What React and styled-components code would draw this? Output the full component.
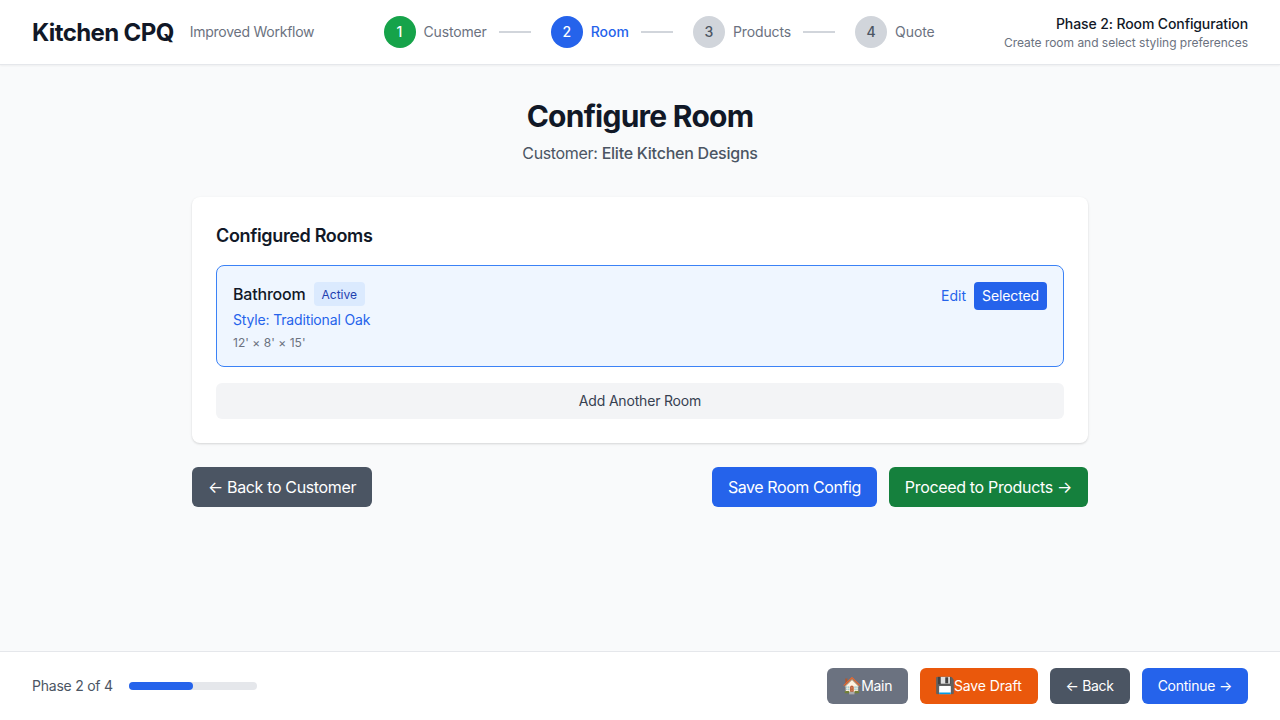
import React from "react";
import styled, { createGlobalStyle } from "styled-components";

const Global = createGlobalStyle`
  *, *::before, *::after { box-sizing: border-box; }
  body {
    margin: 0;
    background: #f9fafb;
    font-family: Inter, "Liberation Sans", sans-serif;
    font-size: 16px;
    line-height: 24px;
    color: #111827;
    -webkit-font-smoothing: antialiased;
  }
  h1, h2, h3, p { margin: 0; }
  button { font-family: inherit; border: 0; margin: 0; cursor: pointer; }
`;

const Page = styled.div`
  height: 100vh;
  display: flex;
  flex-direction: column;
`;

const Header = styled.header`
  flex: none;
  height: 65px;
  padding: 0 32px;
  display: flex;
  align-items: center;
  justify-content: space-between;
  background: #fff;
  border-bottom: 1px solid #e5e7eb;
  box-shadow: 0 1px 2px rgba(0, 0, 0, 0.05);
`;

const Brand = styled.div`
  display: flex;
  align-items: center;
  gap: 16px;
  white-space: nowrap;
`;

const BrandName = styled.h1`
  padding-top: 2px;
  font-size: 24px;
  line-height: 32px;
  font-weight: 700;
  letter-spacing: -0.61px;
`;

const Tagline = styled.span`
  font-size: 14px;
  line-height: 20px;
  color: #6b7280;
  letter-spacing: -0.25px;
`;

const Steps = styled.nav`
  display: flex;
  align-items: center;
  gap: 20px;
`;

const Step = styled.div`
  display: flex;
  align-items: center;
`;

const circleColors = {
  done: ["#16a34a", "#fff"],
  current: ["#2563eb", "#fff"],
  todo: ["#d1d5db", "#4b5563"],
};

const StepCircle = styled.span`
  width: 32px;
  height: 32px;
  border-radius: 50%;
  display: flex;
  align-items: center;
  justify-content: center;
  font-size: 14px;
  font-weight: 500;
  background: ${(p) => circleColors[p.$state][0]};
  color: ${(p) => circleColors[p.$state][1]};
`;

const StepLabel = styled.span`
  margin-left: 8px;
  font-size: 14px;
  line-height: 20px;
  letter-spacing: ${(p) => p.$tracking}px;
  font-weight: ${(p) => (p.$current ? 500 : 400)};
  color: ${(p) => (p.$current ? "#2563eb" : "#6b7280")};
`;

const StepLine = styled.span`
  width: 32px;
  height: 2px;
  margin-left: 12px;
  background: #d1d5db;
`;

const PhaseInfo = styled.div`
  text-align: right;
  white-space: nowrap;
`;

const PhaseTitle = styled.p`
  font-size: 14px;
  line-height: 20px;
  font-weight: 500;
  letter-spacing: -0.11px;
`;

const PhaseHint = styled.p`
  padding-top: 1px;
  margin-bottom: -1px;
  font-size: 12px;
  line-height: 16px;
  color: #6b7280;
  letter-spacing: -0.02px;
`;

const Main = styled.main`
  flex: 1;
  width: 896px;
  margin: 0 auto;
  padding-top: 32px;
`;

const Intro = styled.div`
  text-align: center;
  margin-bottom: 32px;
`;

const Title = styled.h2`
  padding-top: 1px;
  font-size: 30px;
  line-height: 36px;
  font-weight: 700;
  letter-spacing: -0.75px;
  margin-bottom: 7px;
`;

const Subtitle = styled.p`
  color: #4b5563;
  letter-spacing: -0.34px;
  strong {
    font-weight: 500;
    letter-spacing: -0.24px;
  }
`;

const Card = styled.section`
  padding: 24px;
  background: #fff;
  border-radius: 8px;
  box-shadow: 0 1px 3px rgba(0, 0, 0, 0.1), 0 1px 2px rgba(0, 0, 0, 0.06);
`;

const CardTitle = styled.h3`
  padding-top: 1px;
  font-size: 18px;
  line-height: 28px;
  font-weight: 600;
  letter-spacing: -0.35px;
  margin-bottom: 15px;
`;

const Room = styled.div`
  display: flex;
  justify-content: space-between;
  align-items: flex-start;
  padding: 16px;
  border: 1px solid #3b82f6;
  border-radius: 8px;
  background: #eff6ff;
`;

const RoomInfo = styled.div`
  display: flex;
  flex-direction: column;
  gap: 4px;
`;

const RoomHeading = styled.div`
  display: flex;
  align-items: center;
  gap: 8px;
`;

const RoomName = styled.span`
  font-weight: 500;
  letter-spacing: -0.2px;
`;

const Badge = styled.span`
  padding: 5px 8px 3px;
  border-radius: 4px;
  background: #dbeafe;
  color: #1e40af;
  font-size: 12px;
  line-height: 16px;
`;

const RoomStyle = styled.p`
  font-size: 14px;
  line-height: 20px;
  color: #2563eb;
  letter-spacing: -0.16px;
`;

const RoomSize = styled.p`
  padding-top: 1px;
  margin-bottom: -1px;
  font-size: 12px;
  line-height: 16px;
  color: #6b7280;
  letter-spacing: 0.04px;
`;

const RoomActions = styled.div`
  display: flex;
  align-items: center;
  gap: 8px;
`;

const EditButton = styled.button`
  padding: 0;
  background: none;
  color: #2563eb;
  font-size: 14px;
  line-height: 20px;
`;

const SelectedButton = styled.button`
  padding: 4px 8px;
  border-radius: 4px;
  background: #2563eb;
  color: #fff;
  font-size: 14px;
  line-height: 20px;
  letter-spacing: -0.12px;
`;

const AddButton = styled.button`
  display: block;
  width: 100%;
  height: 36px;
  margin-top: 16px;
  border-radius: 6px;
  background: #f3f4f6;
  color: #374151;
  font-size: 14px;
  line-height: 20px;
  letter-spacing: -0.18px;
`;

const Actions = styled.div`
  display: flex;
  justify-content: space-between;
  margin-top: 24px;
`;

const ButtonGroup = styled.div`
  display: flex;
  gap: 12px;
`;

const Button = styled.button`
  display: flex;
  align-items: center;
  padding: 8px 16px;
  border-radius: 6px;
  color: #fff;
  white-space: nowrap;
  background: ${(p) => p.$bg};
  font-size: ${(p) => (p.$small ? 14 : 16)}px;
  line-height: ${(p) => (p.$small ? 20 : 24)}px;
  letter-spacing: ${(p) => p.$tracking}px;
`;

const Emoji = styled.span`
  width: 17.8px;
  padding-bottom: 1px;
  margin-top: -1px;
  display: flex;
  justify-content: center;
  font-size: 16px;
  letter-spacing: 0;
`;

const Footer = styled.footer`
  flex: none;
  height: 69px;
  padding: 0 32px;
  display: flex;
  align-items: center;
  justify-content: space-between;
  background: #fff;
  border-top: 1px solid #e5e7eb;
`;

const Progress = styled.div`
  display: flex;
  align-items: center;
  gap: 16px;
  font-size: 14px;
  line-height: 20px;
  letter-spacing: -0.23px;
  color: #4b5563;
`;

const Track = styled.div`
  width: 128px;
  height: 8px;
  border-radius: 4px;
  background: #e5e7eb;
`;

const Fill = styled.div`
  width: 50%;
  height: 8px;
  border-radius: 4px;
  background: #2563eb;
`;

const steps = [
  { label: "Customer", state: "done", tracking: -0.15 },
  { label: "Room", state: "current", tracking: 0 },
  { label: "Products", state: "todo", tracking: -0.13 },
  { label: "Quote", state: "todo", tracking: -0.05 },
];

export default function App() {
  return (
    <Page>
      <Global />
      <Header>
        <Brand>
          <BrandName>Kitchen CPQ</BrandName>
          <Tagline>Improved Workflow</Tagline>
        </Brand>
        <Steps>
          {steps.map(({ label, state, tracking }, i) => (
            <Step key={label}>
              <StepCircle $state={state}>{i + 1}</StepCircle>
              <StepLabel $current={state === "current"} $tracking={tracking}>
                {label}
              </StepLabel>
              {i < steps.length - 1 && <StepLine />}
            </Step>
          ))}
        </Steps>
        <PhaseInfo>
          <PhaseTitle>Phase 2: Room Configuration</PhaseTitle>
          <PhaseHint>Create room and select styling preferences</PhaseHint>
        </PhaseInfo>
      </Header>
      <Main>
        <Intro>
          <Title>Configure Room</Title>
          <Subtitle>
            Customer: <strong>Elite Kitchen Designs</strong>
          </Subtitle>
        </Intro>
        <Card>
          <CardTitle>Configured Rooms</CardTitle>
          <Room>
            <RoomInfo>
              <RoomHeading>
                <RoomName>Bathroom</RoomName>
                <Badge>Active</Badge>
              </RoomHeading>
              <RoomStyle>Style: Traditional Oak</RoomStyle>
              <RoomSize>12' × 8' × 15'</RoomSize>
            </RoomInfo>
            <RoomActions>
              <EditButton>Edit</EditButton>
              <SelectedButton>Selected</SelectedButton>
            </RoomActions>
          </Room>
          <AddButton>Add Another Room</AddButton>
        </Card>
        <Actions>
          <Button $bg="#4b5563" $tracking={-0.35}>← Back to Customer</Button>
          <ButtonGroup>
            <Button $bg="#2563eb" $tracking={-0.42}>Save Room Config</Button>
            <Button $bg="#15803d" $tracking={-0.33}>Proceed to Products →</Button>
          </ButtonGroup>
        </Actions>
      </Main>
      <Footer>
        <Progress>
          <span>Phase 2 of 4</span>
          <Track>
            <Fill />
          </Track>
        </Progress>
        <ButtonGroup>
          <Button $small $bg="#6b7280" $tracking={-0.3}>
            <Emoji>🏠</Emoji>Main
          </Button>
          <Button $small $bg="#ea580c" $tracking={-0.12}>
            <Emoji>💾</Emoji>Save Draft
          </Button>
          <Button $small $bg="#4b5563" $tracking={-0.33}>← Back</Button>
          <Button $small $bg="#2563eb" $tracking={-0.25}>Continue →</Button>
        </ButtonGroup>
      </Footer>
    </Page>
  );
}
